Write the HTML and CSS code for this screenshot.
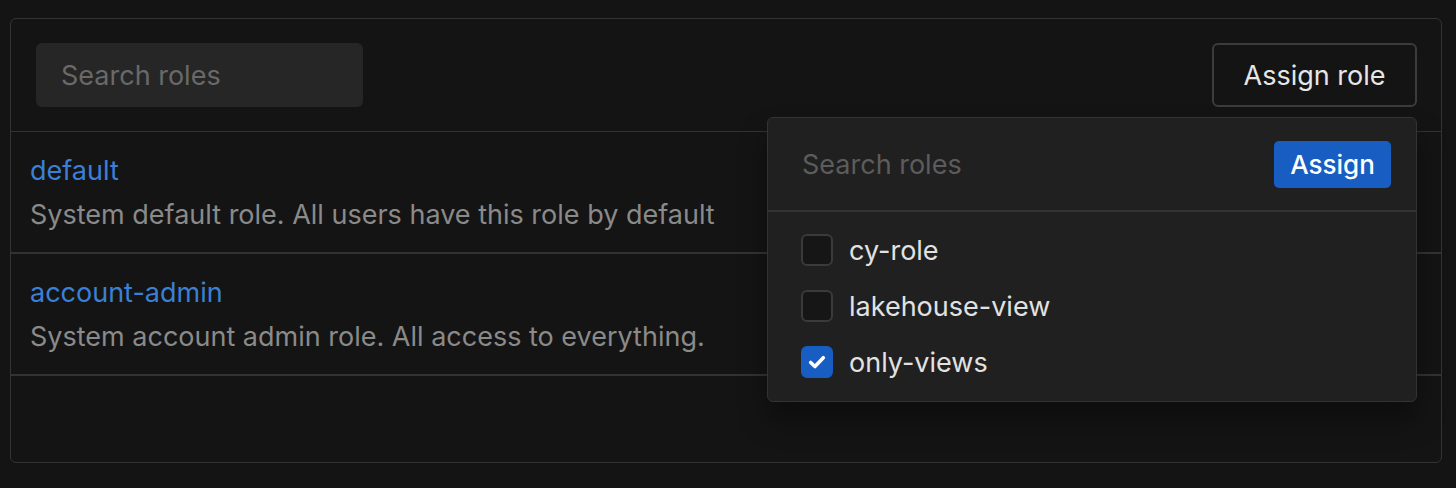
FILE: index.html
```html
<!DOCTYPE html>
<html lang="en">
<head>
    <meta charset="UTF-8">
    <meta name="viewport" content="width=device-width, initial-scale=1.0">
    <title>Roles</title>
    <link rel="stylesheet" href="styles.css">
</head>
<body>

<div class="card">
    <div class="card-header">
        <input type="text" class="search" placeholder="Search roles">
        <div class="assign-wrap">
            <button class="btn-outline">Assign role</button>

            <!-- Assign dropdown -->
            <div class="dropdown">
                <div class="dropdown-head">
                    <input type="text" class="dropdown-search" placeholder="Search roles">
                    <button class="btn-primary">Assign</button>
                </div>
                <ul class="option-list">
                    <li class="option">
                        <span class="checkbox"></span>
                        <span class="option-label">cy-role</span>
                    </li>
                    <li class="option">
                        <span class="checkbox"></span>
                        <span class="option-label">lakehouse-view</span>
                    </li>
                    <li class="option">
                        <span class="checkbox checked">
                            <svg viewBox="0 0 16 16" width="22" height="22"><path d="M3.4 8.3 L6.5 11.3 L12.6 4.9" fill="none" stroke="#fff" stroke-width="2.6" stroke-linecap="round" stroke-linejoin="round"/></svg>
                        </span>
                        <span class="option-label">only-views</span>
                    </li>
                </ul>
            </div>
        </div>
    </div>

    <div class="role-row">
        <a class="role-name" href="#">default</a>
        <div class="role-desc">System default role. All users have this role by default</div>
    </div>
    <div class="role-row">
        <a class="role-name" href="#">account-admin</a>
        <div class="role-desc">System account admin role. All access to everything.</div>
    </div>
    <div class="card-footer"></div>
</div>

</body>
</html>
```

FILE: styles.css
```css
/* Global Styles */
* {
    margin: 0;
    padding: 0;
    box-sizing: border-box;
}

body {
    font-family: 'Inter', 'Noto Sans', sans-serif;
    background-color: #141414;
    color: #e2e2e2;
    padding: 18px 14px 0 10px;
}

.card {
    border: 1px solid #343434;
    border-radius: 6px;
    background: #141414;
}

.card-header {
    display: flex;
    justify-content: space-between;
    align-items: center;
    padding: 24px 24px 24px 25px;
    border-bottom: 1px solid #333;
}

.search {
    width: 327px;
    height: 64px;
    padding: 0 25px;
    background: #262626;
    border: none;
    border-radius: 6px;
    font-family: inherit;
    font-size: 27px;
    color: #ddd;
    outline: none;
}

.search::placeholder {
    color: #696969;
}

.assign-wrap {
    position: relative;
}

.btn-outline {
    height: 64px;
    width: 205px;
    background: transparent;
    border: 2px solid #3c3c3c;
    border-radius: 6px;
    font-family: inherit;
    font-size: 27px;
    color: #e6e6e6;
    cursor: pointer;
}

/* Dropdown */
.dropdown {
    position: absolute;
    top: calc(100% + 10px);
    right: 0;
    width: 650px;
    background: #202020;
    border: 1px solid #333;
    border-radius: 6px;
    box-shadow: 0 18px 28px rgba(0, 0, 0, 0.35);
    z-index: 10;
}

.dropdown-head {
    display: flex;
    justify-content: space-between;
    align-items: center;
    height: 94px;
    padding: 0 25px 0 34px;
    border-bottom: 2px solid #333;
}

.dropdown-search {
    flex: 1;
    background: transparent;
    border: none;
    font-family: inherit;
    font-size: 27px;
    color: #ddd;
    outline: none;
}

.dropdown-search::placeholder {
    color: #5c5c5c;
}

.btn-primary {
    width: 117px;
    height: 47px;
    background: #185dc2;
    border: none;
    border-radius: 5px;
    font-family: inherit;
    font-size: 26px;
    font-weight: 500;
    color: #fff;
    cursor: pointer;
}

.option-list {
    list-style: none;
    padding: 10px 0 11px;
}

.option {
    display: flex;
    align-items: center;
    gap: 16px;
    height: 56px;
    padding: 0 33px;
}

.checkbox {
    width: 32px;
    height: 32px;
    border: 2px solid #3a3a3a;
    border-radius: 6px;
    background: #161616;
    display: flex;
    align-items: center;
    justify-content: center;
}

.checkbox.checked {
    background: #185dc2;
    border-color: #185dc2;
}

.option-label {
    font-size: 27px;
    color: #e2e2e2;
}

/* Role rows */
.role-row {
    padding: 21px 19px 19px;
    border-bottom: 2px solid #333;
}

.role-name {
    display: block;
    font-size: 27px;
    line-height: 36px;
    color: #3b80d6;
    text-decoration: none;
}

.role-desc {
    margin-top: 8px;
    font-size: 27px;
    line-height: 36px;
    color: #8a8a8a;
}

.card-footer {
    height: 86px;
}
```
